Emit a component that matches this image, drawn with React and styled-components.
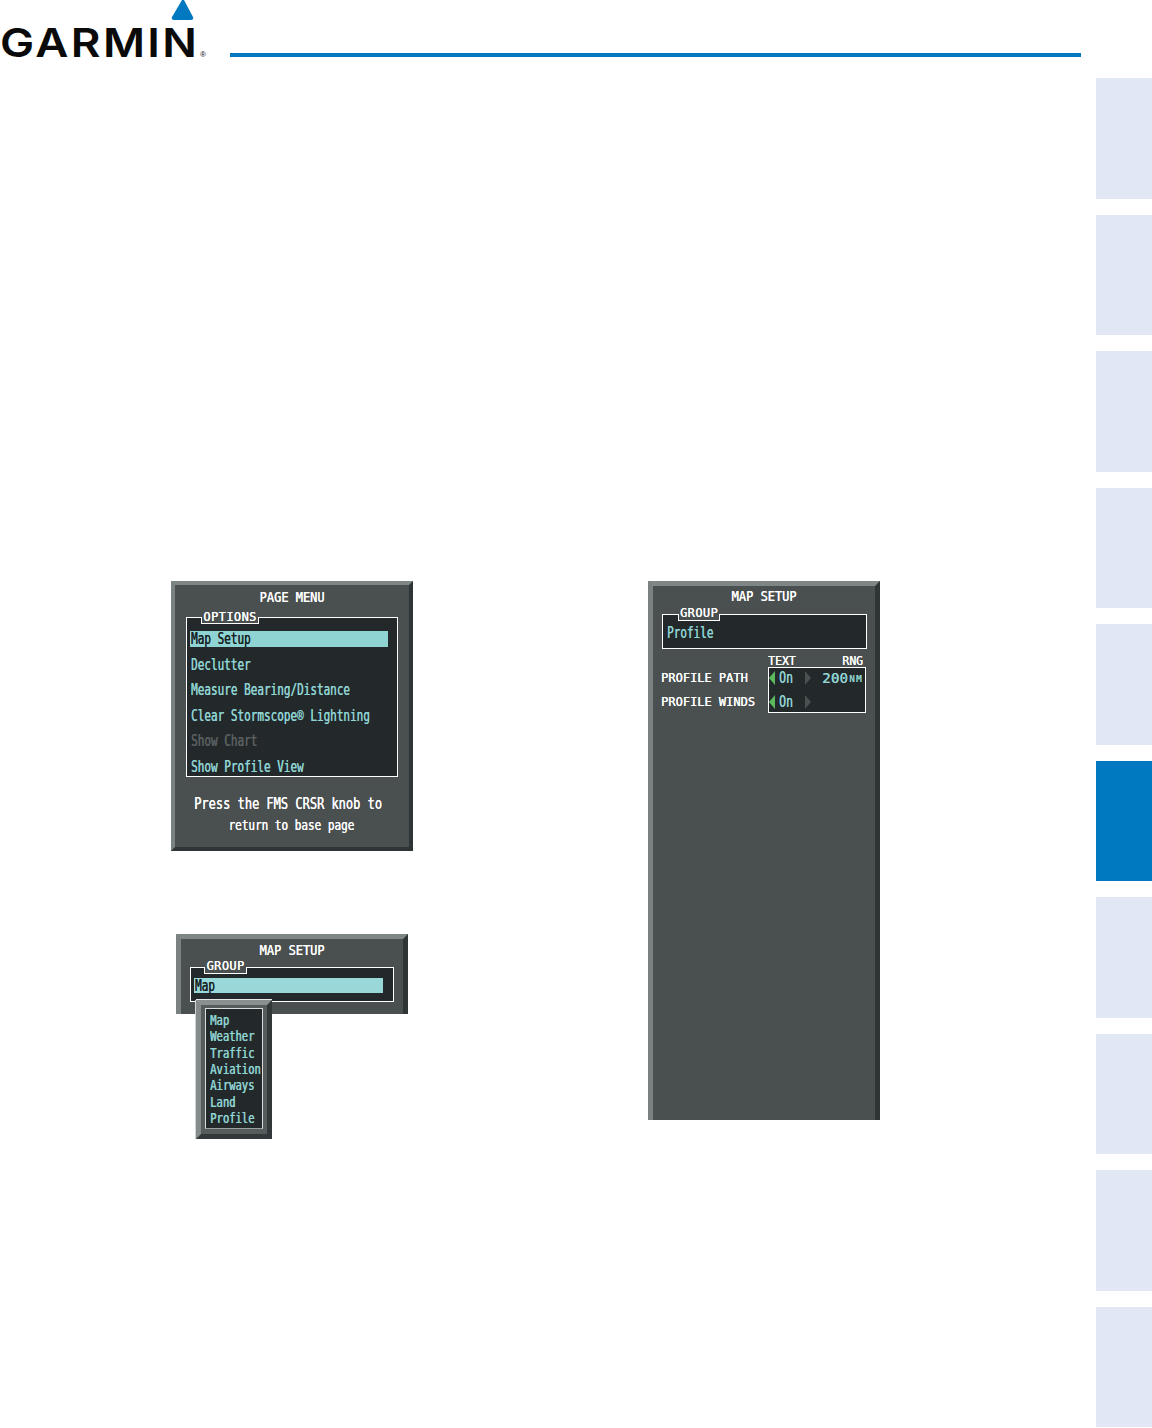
import React from 'react';
import styled, { createGlobalStyle } from 'styled-components';

const GlobalStyle = createGlobalStyle`
  html, body { margin: 0; padding: 0; background: #fff; }
  body { font-family: "DejaVu Sans Mono", "Liberation Mono", monospace; }
`;

const BLUE = '#0079c1';
const TEAL = '#8fd3d2';
const PANEL = '#4a4f4f';
const SCREEN = '#23292b';

const Page = styled.div`
  display: flex;
  width: 1152px;
  height: 1428px;
  overflow: hidden;
  background: #fff;
`;

const Main = styled.main`
  width: 1096px;
`;

const Header = styled.header`
  display: flex;
  align-items: flex-end;
  height: 57px;
  padding-right: 15px;
`;

const Logo = styled.svg`
  display: block;
  width: 230px;
  height: 70px;
  flex: none;
  margin-bottom: -8px;
`;

const Rule = styled.div`
  flex: 1;
  height: 4px;
  background: ${BLUE};
`;

const Sidebar = styled.nav`
  display: flex;
  flex-direction: column;
  gap: 16px;
  width: 56px;
  padding-top: 78px;
`;

const Tab = styled.div`
  height: 120.5px;
  background: ${p => (p.$active ? BLUE : '#e1e7f4')};
`;

const Columns = styled.div`
  display: flex;
  gap: 235px;
  padding: 524px 0 0 171px;
`;

const LeftColumn = styled.div`
  display: flex;
  flex-direction: column;
  align-items: center;
  gap: 83px;
  width: 242px;
`;

const Panel = styled.section`
  position: relative;
  box-sizing: border-box;
  width: ${p => p.$w}px;
  height: ${p => p.$h}px;
  background: ${PANEL};
  border-style: solid;
  border-width: ${p => p.$bevel}px;
  border-color: #7f8686 #2f3536 #2f3536 #7a8181;
  border-bottom-width: ${p => (p.$cut ? 0 : p.$bevel)}px;
`;

const Title = styled.div`
  height: 14px;
  margin-top: ${p => p.$top}px;
  color: #fff;
  font-size: 12px;
  line-height: 14px;
  text-align: center;
  text-shadow: 0.2px 0 0 #fff;
`;

const GroupBox = styled.div`
  position: relative;
  box-sizing: border-box;
  width: ${p => p.$w}px;
  height: ${p => p.$h}px;
  margin-top: ${p => p.$top}px;
  margin-left: ${p => p.$left}px;
  padding: ${p => p.$pad};
  background: ${SCREEN};
  border: 1px solid #fff;
`;

const Legend = styled.div`
  position: absolute;
  left: ${p => p.$left}px;
  top: -1px;
  box-sizing: border-box;
  width: ${p => p.$w}px;
  height: 7px;
  background: ${PANEL};
  border: 1px solid #fff;
  border-top: 0;
  color: #fff;
  font-size: 12px;
  letter-spacing: 0.4px;
  line-height: 0;
  text-align: center;
  text-shadow: 0.2px 0 0 #fff;

  span {
    display: inline-block;
    transform: translateY(${p => p.$shift || 0}px);
  }
`;

const Tall = styled.span`
  display: inline-block;
  white-space: pre;
  transform: scaleY(${p => p.$y || 1.4});
  text-shadow: ${p => p.$bold || 0.3}px 0 0 currentColor;
`;

const MenuList = styled.div`
  display: flex;
  flex-direction: column;
  gap: 9.5px;
`;

const MenuRow = styled.div`
  width: 197px;
  height: 16px;
  padding-left: 1px;
  background: ${p => (p.$selected ? TEAL : 'transparent')};
  color: ${p => (p.$selected ? '#16201f' : p.$disabled ? '#5a6060' : TEAL)};
  font-size: 11px;
  line-height: 17px;
  white-space: nowrap;
`;

const Message = styled.div`
  margin-top: 17px;
  padding-right: 8px;
  color: #fff;
  line-height: 21px;
  text-align: center;
`;

const MessageLine = styled.div`
  font-size: ${p => p.$size}px;
`;

const Selection = styled.div`
  width: ${p => p.$w}px;
  height: 15px;
  padding-left: 1px;
  background: #98d8d8;
  color: #16201f;
  font-size: 11px;
  line-height: 17px;
`;

const Dropdown = styled.div`
  position: absolute;
  left: 15px;
  top: 61px;
  box-sizing: border-box;
  width: 76px;
  height: 139px;
  padding: 3px 4px;
  background: #565c5c;
  border-style: solid;
  border-width: 5px;
  border-color: #8a9090 #33393a #33393a #858b8b;
  box-shadow: 0 -1px 0 #e6e8e8, -1px 0 0 #d0d4d4;
`;

const DropList = styled.div`
  display: flex;
  flex-direction: column;
  box-sizing: border-box;
  width: 58px;
  height: 121px;
  padding: 2px 0 0 4px;
  background: ${SCREEN};
  border: 1px solid #d8dcdc;
  border-bottom-color: #9aa0a0;
`;

const DropItem = styled.div`
  height: 16.35px;
  color: ${TEAL};
  font-size: 10.5px;
  line-height: 16px;
`;

const ProfileText = styled.div`
  color: ${TEAL};
  font-size: 11px;
  line-height: 20px;
`;

const FieldGrid = styled.div`
  display: grid;
  grid-template-columns: 107px 98px;
  grid-template-rows: 12px 46px;
  margin: 6px 0 0 8px;
`;

const ColumnHeads = styled.div`
  display: flex;
  justify-content: space-between;
  padding: 0 3px 0 0;
  grid-column: 2;
  color: #fff;
  font-size: 11.5px;
  line-height: 12px;
  text-shadow: 0.3px 0 0 #fff;
`;

const FieldLabels = styled.div`
  display: flex;
  flex-direction: column;
  gap: 4px;
  padding-top: 1px;
  color: #fff;
  font-size: 12px;
  line-height: 20px;
  text-shadow: 0.3px 0 0 #fff;
`;

const FieldBox = styled.div`
  display: flex;
  flex-direction: column;
  gap: 4px;
  box-sizing: border-box;
  background: ${SCREEN};
  border: 1px solid #fff;
`;

const FieldRow = styled.div`
  display: flex;
  align-items: center;
  height: 20px;
  color: ${TEAL};
`;

const ArrowRight = styled.i`
  flex: none;
  width: 0;
  height: 0;
  border-style: solid;
  border-width: 7px 0 7px 6px;
  border-color: transparent;
  border-left-color: #4a4f4f;
  margin-left: 11px;
`;

const ArrowLeft = styled.i`
  flex: none;
  width: 0;
  height: 0;
  border-style: solid;
  border-width: 7px 6px 7px 0;
  border-color: transparent;
  border-right-color: #5cb85c;
`;

const OnText = styled.span`
  width: 15px;
  margin: -2px 0 0 4px;
  font-size: 11.5px;
  line-height: 20px;
`;

const Range = styled.span`
  margin-left: 11px;
  font-size: 14px;
  letter-spacing: 0.3px;
  line-height: 20px;
  text-shadow: 0.4px 0 0 ${TEAL};
`;

const Unit = styled.span`
  margin-left: 1px;
  padding-top: 2px;
  font-size: 9px;
  letter-spacing: 1.5px;
  line-height: 20px;
  text-shadow: 0.3px 0 0 ${TEAL};
`;

const menuItems = ['Map Setup', 'Declutter', 'Measure Bearing/Distance', 'Clear Stormscope® Lightning', 'Show Chart', 'Show Profile View'];
const groupItems = ['Map', 'Weather', 'Traffic', 'Aviation', 'Airways', 'Land', 'Profile'];
const tabs = [0, 1, 2, 3, 4, 5, 6, 7, 8, 9];

const App = () => {
  return (
    <Page>
      <GlobalStyle />
      <Main>
        <Header>
          <Logo viewBox="0 0 230 70">
            <path d="M182 5 L172 22 Q171 25 174 25 L191 25 Q194 25 193 22 L184 5 Q183 3 182 5 Z" fill={BLUE} />
            <text x="0" y="62" transform="scale(1.14 1)" textLength="172.8" lengthAdjust="spacing" fontFamily="Inter, sans-serif" fontWeight="600" fontSize="40" fill="#0a0a0a">GARMIN</text>
            <text x="200" y="62" fontFamily="Liberation Sans, sans-serif" fontSize="8" fill="#0a0a0a">®</text>
          </Logo>
          <Rule />
        </Header>
        <Columns>
          <LeftColumn>
            <Panel $w={242} $h={270} $bevel={4}>
              <Title $top={6}><Tall $y={1.1}>PAGE MENU</Tall></Title>
              <GroupBox $w={212} $h={160} $top={12} $left={11} $pad="13px 3px 0">
                <Legend $left={14} $w={58}><span>OPTIONS</span></Legend>
                <MenuList>
                  {menuItems.map((item, i) => (
                    <MenuRow key={item} $selected={i === 0} $disabled={i === 4}><Tall>{item}</Tall></MenuRow>
                  ))}
                </MenuList>
              </GroupBox>
              <Message>
                <MessageLine $size={12}><Tall $y={1.25}>Press the FMS CRSR knob to</Tall></MessageLine>
                <MessageLine $size={11}><Tall $y={1.3}> return to base page</Tall></MessageLine>
              </Message>
            </Panel>
            <Panel $w={232} $h={80} $bevel={5} $cut>
              <Title $top={5}><Tall $y={1.1}>MAP SETUP</Tall></Title>
              <GroupBox $w={204} $h={35} $top={9} $left={9} $pad="10px 3px 0">
                <Legend $left={13} $w={43} $shift={-1}><span>GROUP</span></Legend>
                <Selection $w={188}><Tall>Map</Tall></Selection>
              </GroupBox>
              <Dropdown>
                <DropList>
                  {groupItems.map(item => (
                    <DropItem key={item}><Tall $bold={0.5}>{item}</Tall></DropItem>
                  ))}
                </DropList>
              </Dropdown>
            </Panel>
          </LeftColumn>
          <Panel $w={232} $h={539} $bevel={5} $cut>
            <Title $top={4}><Tall $y={1.1}>MAP SETUP</Tall></Title>
            <GroupBox $w={205} $h={35} $top={10} $left={9} $pad="9px 4px 0">
              <Legend $left={15} $w={42} $shift={-1}><span>GROUP</span></Legend>
              <ProfileText><Tall>Profile</Tall></ProfileText>
            </GroupBox>
            <FieldGrid>
              <ColumnHeads><span>TEXT</span><span>RNG</span></ColumnHeads>
              <FieldLabels>
                <span>PROFILE PATH</span>
                <span>PROFILE WINDS</span>
              </FieldLabels>
              <FieldBox>
                <FieldRow>
                  <ArrowLeft />
                  <OnText><Tall>On</Tall></OnText>
                  <ArrowRight />
                  <Range>200</Range>
                  <Unit>NM</Unit>
                </FieldRow>
                <FieldRow>
                  <ArrowLeft />
                  <OnText><Tall>On</Tall></OnText>
                  <ArrowRight />
                </FieldRow>
              </FieldBox>
            </FieldGrid>
          </Panel>
        </Columns>
      </Main>
      <Sidebar>
        {tabs.map(t => <Tab key={t} $active={t === 5} />)}
      </Sidebar>
    </Page>
  );
};

export default App;
